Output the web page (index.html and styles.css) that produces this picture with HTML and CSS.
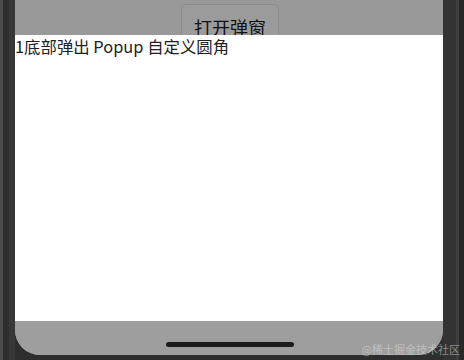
FILE: index.html
```html
<!DOCTYPE html>
<html lang="zh-CN">
<head>
    <meta charset="UTF-8">
    <meta name="viewport" content="width=device-width, initial-scale=1.0">
    <title>Popup 自定义圆角</title>
    <link rel="stylesheet" href="styles.css">
</head>
<body>
    <div class="device">
        <div class="edge-left"></div>
        <div class="screen">
            <div class="page-top">
                <button class="open-btn" type="button">打开弹窗</button>
            </div>
            <div class="popup">1底部弹出 Popup 自定义圆角</div>
            <div class="safe-area">
                <div class="home-bar"></div>
            </div>
        </div>
        <div class="edge-right">
            <div class="band-a"></div>
            <div class="band-b"></div>
            <div class="band-c"></div>
        </div>
        <div class="watermark">@稀土掘金技术社区</div>
    </div>
</body>
</html>
```

FILE: styles.css
```css
body {
    margin: 0;
    background: #2c2c2c;
    font-family: "Noto Sans CJK SC", "Noto Sans", sans-serif;
}
.device {
    position: relative;
    display: flex;
    width: 464px;
    height: 360px;
    overflow: hidden;
    background: #2e2e2e;
}
.edge-left {
    width: 15px;
    height: 360px;
    background: linear-gradient(to right, #4c4c4c 0, #4c4c4c 3px, #2e2e2e 3px, #2e2e2e 9px, #383838 9px);
}
.screen {
    display: flex;
    flex-direction: column;
    width: 428px;
    height: 355px;
    border-radius: 0 0 25px 25px;
    overflow: hidden;
    background: #9e9e9e;
}
.page-top {
    height: 35px;
    display: flex;
    justify-content: center;
    overflow: hidden;
    background: #999;
}
.open-btn {
    margin-top: 4px;
    margin-left: 2px;
    width: 98px;
    height: 44px;
    padding: 0 0 4px;
    border: 1px solid #8c8c8c;
    border-radius: 5px;
    background: #9b9b9b;
    color: #111;
    font-family: inherit;
    font-size: 18px;
    line-height: 44px;
}
.popup {
    flex: 1;
    background: #fff;
    color: #222;
    font-size: 16.4px;
    line-height: 20px;
    padding-top: 1px;
}
.safe-area {
    height: 34px;
    display: flex;
    justify-content: center;
    align-items: flex-end;
    padding-bottom: 8px;
    box-sizing: border-box;
    background: #9e9e9e;
}
.home-bar {
    width: 128px;
    height: 5px;
    margin-left: 1px;
    border-radius: 3px;
    background: #1c1c1c;
}
.edge-right {
    display: flex;
    flex: 1;
}
.band-a {
    width: 13px;
    background: #333;
}
.band-b {
    width: 3px;
    background: #3e3e3e;
}
.band-c {
    flex: 1;
    background: #282828;
}
.watermark {
    position: absolute;
    right: 4px;
    bottom: 4px;
    font-size: 11px;
    line-height: 14px;
    color: rgba(225, 225, 225, 0.5);
}
```
